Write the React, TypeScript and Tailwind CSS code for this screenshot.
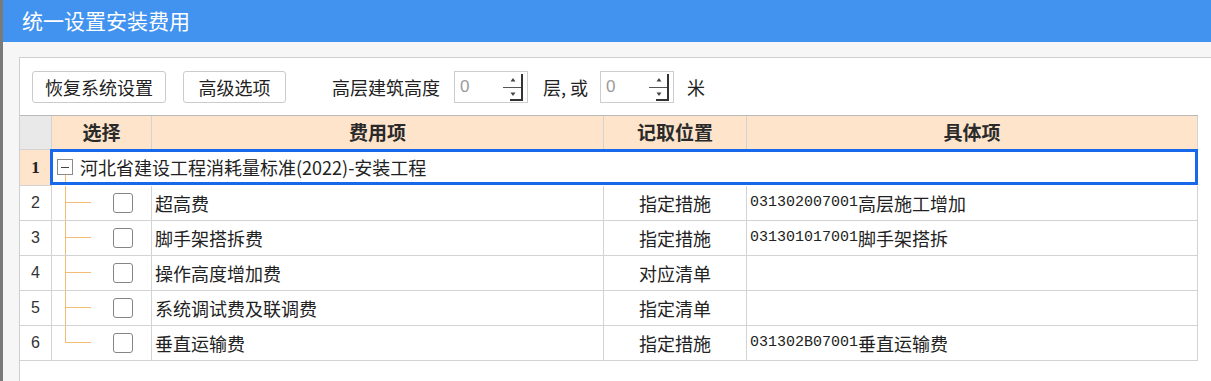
import React from "react";

const rows = [
  { no: 2, name: "超高费", place: "指定措施", code: "031302007001", detail: "高层施工增加" },
  { no: 3, name: "脚手架搭拆费", place: "指定措施", code: "031301017001", detail: "脚手架搭拆" },
  { no: 4, name: "操作高度增加费", place: "对应清单", code: "", detail: "" },
  { no: 5, name: "系统调试费及联调费", place: "指定清单", code: "", detail: "" },
  { no: 6, name: "垂直运输费", place: "指定措施", code: "031302B07001", detail: "垂直运输费" },
];

function Spinner() {
  return (
    <svg width="22" height="30" viewBox="0 0 22 30" className="shrink-0">
      <line x1="1" y1="15.5" x2="20" y2="15.5" stroke="#555" strokeWidth="1" />
      <line x1="20" y1="2" x2="20" y2="29" stroke="#333" strokeWidth="2" />
      <line x1="8" y1="28" x2="21" y2="28" stroke="#333" strokeWidth="2" />
      <path d="M11 6 L13.5 9.5 L8.5 9.5 Z" fill="#444" />
      <path d="M11 24 L13.5 20.5 L8.5 20.5 Z" fill="#444" />
    </svg>
  );
}

function NumberInput() {
  return (
    <div className="w-[74px] h-[32px] border border-[#cdcdcd] bg-white flex items-center justify-between pl-[5px] pr-[3px]">
      <span className="text-[17px] text-[#9a9a9a] font-['Liberation_Sans',sans-serif]">0</span>
      <Spinner />
    </div>
  );
}

// tree connector drawn with borders so the lines stay on whole pixels
function Tree({ last }: { last: boolean }) {
  return (
    <div className="ml-[13px] self-stretch w-[26px] flex flex-col shrink-0">
      <div className="h-[17px] border-l border-b border-[#f3bc72]" />
      <div className={last ? "flex-1" : "flex-1 border-l border-[#f3bc72]"} />
    </div>
  );
}

export default function App() {
  return (
    <div className="w-[1211px] h-[381px] overflow-hidden flex bg-[#f6f6f6] text-[#222] font-['Noto_Sans_CJK_SC',sans-serif]">
      <div className="w-[3px] bg-[#7a7a7a]" />
      <div className="flex-1 flex flex-col">
        <div className="h-[42px] shrink-0 bg-[#4193ef] text-white text-[21px] pl-[19px] flex items-center">
          统一设置安装费用
        </div>
        <div className="flex-1 pt-[15px] pl-[16px]">
          <div className="h-full border-l border-t border-[#cfcfcf] bg-white">
            {/* toolbar */}
            <div className="flex items-center pt-[13px] pl-[12px] text-[18px]">
              <button className="h-[32px] w-[134px] border border-[#cbcbcb] rounded-[3px] bg-white flex items-center justify-center">
                恢复系统设置
              </button>
              <button className="ml-[17px] h-[32px] w-[103px] border border-[#cbcbcb] rounded-[3px] bg-white flex items-center justify-center">
                高级选项
              </button>
              <span className="ml-[46px]">高层建筑高度</span>
              <div className="ml-[14px]"><NumberInput /></div>
              <span className="ml-[15px]">层, 或</span>
              <div className="ml-[12px]"><NumberInput /></div>
              <span className="ml-[13px]">米</span>
            </div>

            {/* table */}
            <div className="mt-[12px] w-[1178px] grid grid-cols-[32px_100px_452px_143px_451px] border-t border-[#b9b9b9]">
              <div className="h-[34px] bg-[#e9e9e9] border-r border-b border-[#d3d3d3]" />
              {["选择", "费用项", "记取位置", "具体项"].map((h) => (
                <div
                  key={h}
                  className="h-[34px] bg-[#fde4ca] border-r border-b border-[#d3d3d3] flex items-center justify-center text-[19px] font-bold text-[#2a2a2a]"
                >
                  {h}
                </div>
              ))}

              {/* group row */}
              <div className="h-[36px] bg-[#fde4ca] border-r border-b border-[#d3d3d3] flex items-center justify-center text-[17px] font-bold font-['Liberation_Serif',serif]">
                1
              </div>
              <div className="col-span-4 h-[36px] -mt-px -ml-[2px] border-[3px] border-[#1768ea] flex items-center pl-[4px] text-[18px]">
                <div className="self-stretch flex flex-col items-center w-[16px] mr-[7px]">
                  <div className="flex-1" />
                  <span className="w-[16px] h-[16px] border border-[#8a8a8a] flex items-center justify-center shrink-0">
                    <span className="w-[8px] h-px bg-[#444]" />
                  </span>
                  <div className="flex-1 w-px bg-[#f3bc72]" />
                </div>
                河北省建设工程消耗量标准(2022)-安装工程
              </div>

              {rows.map((r, i) => (
                <React.Fragment key={r.no}>
                  <div className="h-[35px] border-r border-b border-[#d3d3d3] flex items-center justify-center text-[16px] font-['Liberation_Sans',sans-serif] text-[#333]">
                    {r.no}
                  </div>
                  <div className="h-[35px] border-r border-b border-[#d3d3d3] flex items-center">
                    <Tree last={i === rows.length - 1} />
                    <span className="ml-[22px] w-[20px] h-[20px] rounded-[3px] border border-[#858585] bg-white" />
                  </div>
                  <div className="h-[35px] border-r border-b border-[#d3d3d3] flex items-center pl-[3px] text-[18px]">
                    {r.name}
                  </div>
                  <div className="h-[35px] border-r border-b border-[#d3d3d3] flex items-center justify-center text-[18px]">
                    {r.place}
                  </div>
                  <div className="h-[35px] border-r border-b border-[#d3d3d3] flex items-center pl-[3px] text-[18px]">
                    <span className="text-[15px] font-['Liberation_Mono',monospace]">{r.code}</span>
                    {r.detail}
                  </div>
                </React.Fragment>
              ))}
            </div>
          </div>
        </div>
      </div>
    </div>
  );
}
